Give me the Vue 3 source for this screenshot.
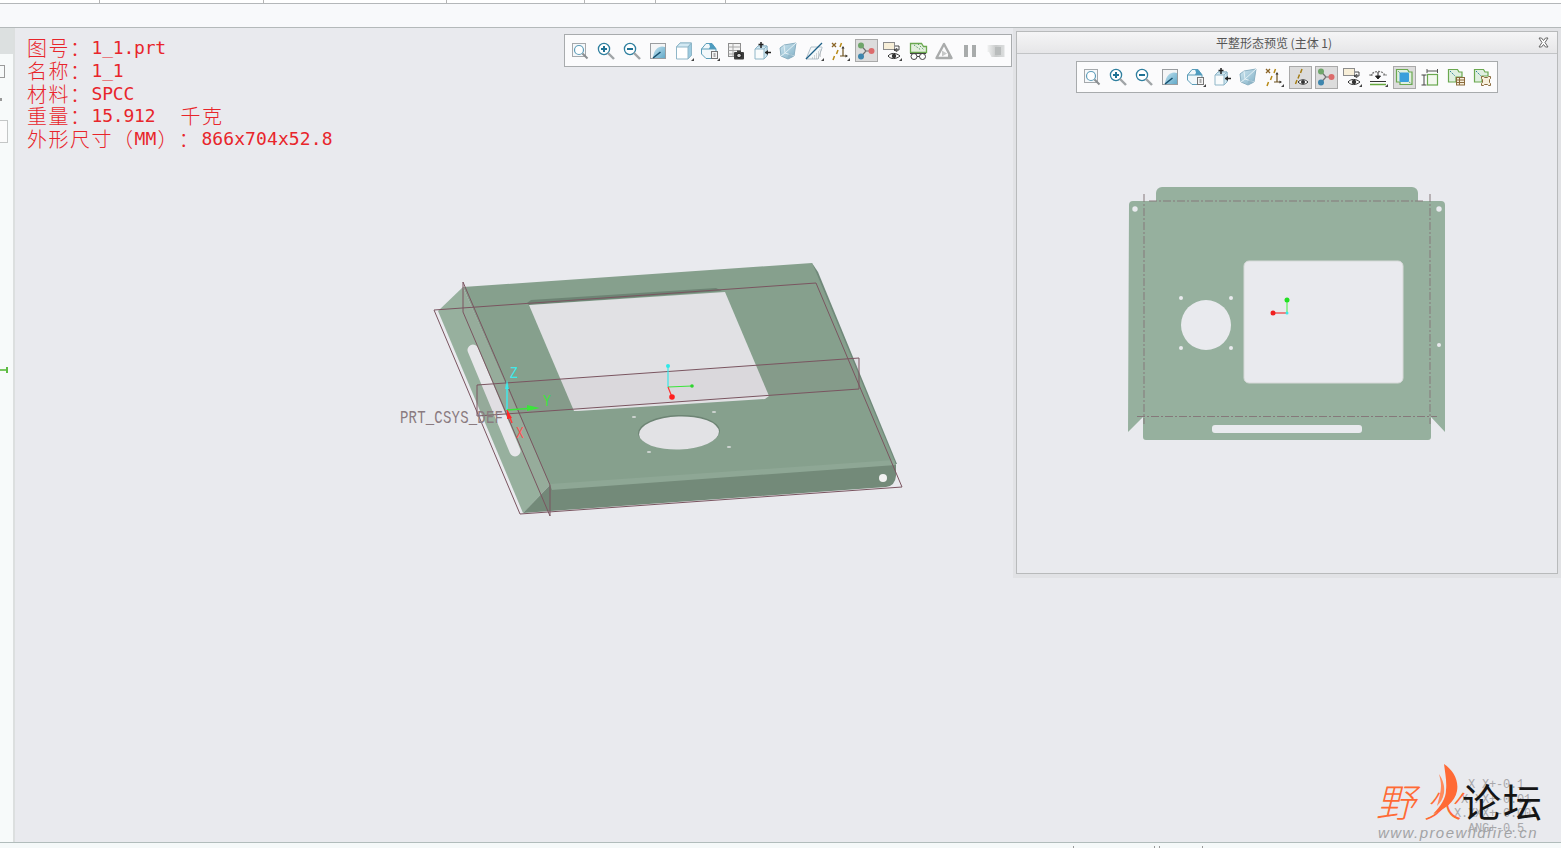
<script setup>
const topTicks = [100, 164, 183, 138, 71, 70]
const mainTools = [
  { id: 'fit' }, { id: 'zin' }, { id: 'zout' }, { id: 'repaint' }, { id: 'shade', dd: true },
  { id: 'orient', dd: true }, { id: 'camera' }, { id: 'spin' }, { id: 'glass' }, { id: 'section', dd: true },
  { id: 'datum', dd: true }, { id: 'branch', on: true }, { id: 'annot', dd: true }, { id: 'greenview' },
  { id: 'tri' }, { id: 'pause' }, { id: 'stop' }
]
const flatTools = [
  { id: 'fit' }, { id: 'zin' }, { id: 'zout' }, { id: 'repaint' }, { id: 'orient', dd: true },
  { id: 'spin' }, { id: 'glass' }, { id: 'datum', dd: true }, { id: 'datumeye', on: true }, { id: 'branch', on: true },
  { id: 'annot', dd: true }, { id: 'flatten', dd: true }, { id: 'greenblue', on: true }, { id: 'ibox' },
  { id: 'greentable' }, { id: 'greenframe' }
]
const info = [
  { cjk: '图号：', rest: '1_1.prt' },
  { cjk: '名称：', rest: '1_1' },
  { cjk: '材料：', rest: 'SPCC' },
  { cjk: '重量：', rest: '15.912  ', tail: '千克', gap: true },
  { cjk: '外形尺寸（', rest: 'MM', tail: '）：', end: '866x704x52.8', wide: true }
]
const smallHoles = [[714, 412], [729, 447], [649, 452], [634, 417]]
const flatHoles = [[1181, 298, 2], [1231, 298, 2], [1181, 348, 2], [1231, 348, 2], [1135, 209, 2.7], [1439, 209, 2.7], [1439, 345, 2]]
const ghostLines = ['X X+-0.1', 'X.XX+-0.01', 'X.XXX+-0.001', 'ANG+-0.5']
</script>

<template>
  <div class="app">
    <svg class="defs" aria-hidden="true">
      <defs>
        <linearGradient id="gBlue" x1="0" y1="0" x2="1" y2="1">
          <stop offset="0" stop-color="#d8eef7" />
          <stop offset="1" stop-color="#5fa8c8" />
        </linearGradient>
        <linearGradient id="gGlass" x1="0" y1="0" x2="1" y2="1">
          <stop offset="0" stop-color="#cfe6f0" />
          <stop offset="1" stop-color="#7fb0c6" />
        </linearGradient>
        <linearGradient id="gStop" x1="0" y1="0" x2="1" y2="0">
          <stop offset="0" stop-color="#f0f1f1" />
          <stop offset=".5" stop-color="#c9cbcb" />
          <stop offset="1" stop-color="#dcdede" />
        </linearGradient>
        <symbol id="fit" viewBox="0 0 20 20">
          <rect x="2.500" y="2.500" width="13" height="13" fill="#f6f8fa" stroke="#a5a9ac" />
          <circle cx="9" cy="9" r="4.500" fill="#fff" stroke="#5d9db9" stroke-width="1.200" />
          <path d="M12.500 12.500 17.500 17.500" stroke="#8b8f92" stroke-width="2" />
        </symbol>
        <symbol id="zin" viewBox="0 0 20 20">
          <circle cx="8" cy="8" r="5.600" fill="#fff" stroke="#2e7f9f" stroke-width="1.300" />
          <path d="M5 8h6M8 5v6" stroke="#1f7295" stroke-width="2" />
          <path d="M12 12 18 18" stroke="#a0a4a7" stroke-width="2.400" />
        </symbol>
        <symbol id="zout" viewBox="0 0 20 20">
          <circle cx="8" cy="8" r="5.600" fill="#fff" stroke="#2e7f9f" stroke-width="1.300" />
          <path d="M5 8h6" stroke="#1f7295" stroke-width="2" />
          <path d="M12 12 18 18" stroke="#a0a4a7" stroke-width="2.400" />
        </symbol>
        <symbol id="repaint" viewBox="0 0 20 20">
          <rect x="2.500" y="2.500" width="15" height="15" fill="url(#gBlue)" stroke="#9a9da0" />
          <path d="M3 3h14v3C12 4 6 7 5 17H3z" fill="#f4f5f6" />
          <path d="M5 17 12.500 11" stroke="#16506f" stroke-width="1.600" />
        </symbol>
        <symbol id="shade" viewBox="0 0 20 20">
          <path d="M2.500 6 6 2h11.500v12L14 18H2.500z" fill="#fff" stroke="#8fb6c8" />
          <path d="M2.500 6H14l3.500-4H6z" fill="#d3e9f3" stroke="#8fb6c8" />
          <path d="M14 6v12l3.500-4V2z" fill="#9ccbe0" stroke="#8fb6c8" />
        </symbol>
        <symbol id="orient" viewBox="0 0 20 20">
          <path d="M1.500 8 6 2.500h6l4 5.500v5l-4 4.500H6l-4.500-4.500z" fill="#f2f8fb" stroke="#5b9db9" />
          <path d="M9 2.500h3l4.500 5.500H9l1-2.500z" fill="#4d9cc0" />
          <path d="M1.500 8H16" stroke="#5b9db9" />
          <rect x="11.500" y="10.500" width="6" height="7" fill="#f4f4f4" stroke="#757575" />
          <path d="M13.500 13h2M13.500 15h2" stroke="#666" />
        </symbol>
        <symbol id="camera" viewBox="0 0 20 20">
          <rect x="2.500" y="2.500" width="12" height="13" fill="#f3f3f3" stroke="#8d8d8d" />
          <path d="M2.500 6h12M2.500 9.500h12M2.500 13h12M7 2.500v13" stroke="#a5a5a5" />
          <rect x="8" y="11" width="10" height="7.500" rx="1" fill="#3c3c3c" />
          <rect x="11" y="9.500" width="4" height="2" fill="#3c3c3c" />
          <circle cx="13" cy="14.500" r="2.300" fill="#cfcfcf" stroke="#111" />
        </symbol>
        <symbol id="spin" viewBox="0 0 20 20">
          <path d="M3 8 6 5h9v10l-3 3H3z" fill="#f8fbfc" stroke="#8fb6c8" />
          <path d="M3 8h9l3-3H6zM12 8v10l3-3V5z" fill="#d0e7f1" stroke="#8fb6c8" />
          <path d="M9 1v6M6.500 3.500h5" stroke="#222" stroke-width="1.500" />
          <path d="M13 11.500h6" stroke="#222" stroke-width="1.500" />
          <path d="M13 11.500 16 9v5z" fill="#222" />
        </symbol>
        <symbol id="glass" viewBox="0 0 20 20">
          <path d="M2 7l4-3 12-2-2 13-6 3-7-3z" fill="url(#gGlass)" stroke="#8bb0c2" />
          <path d="M6 4l1 8-4 3M7 12l9 3M7 12 18 2" stroke="#e3f0f5" fill="none" />
          <path d="M9 18l2-6 5 3z" fill="#8fb4c6" opacity=".7" />
        </symbol>
        <symbol id="section" viewBox="0 0 20 20">
          <path d="M2 18 7 6h11v1L14 18z" fill="#f4f8fa" stroke="#b3c2cb" />
          <path d="M2 18 18 2" stroke="#1c5f86" stroke-width="1.300" />
          <path d="M8 17h8M10 15h7M12 13h6M14 11h4M15.500 9h2.500" stroke="#a9adb0" stroke-dasharray="1 1" />
        </symbol>
        <symbol id="datum" viewBox="0 0 20 20">
          <path d="M2 2l4 4M6 2 2 6" stroke="#8a6426" stroke-width="1.300" />
          <path d="M10 6l1.500-4M6.500 13l1.500-4M3 19l1.500-4" stroke="#b88a16" stroke-width="1.500" />
          <path d="M13 7v8M10 15h6" stroke="#6d5320" stroke-width="1.200" />
          <path d="M13 5l-1.500 2.500h3zM18 15l-2.500-1.500v3z" fill="#33302a" />
        </symbol>
        <symbol id="datumeye" viewBox="0 0 20 20">
          <path d="M12 2 10.500 6M9.500 7.500 8 11.500M7 13 5.500 17" stroke="#a47c14" stroke-width="1.500" />
          <path d="M8 15c3-3 7-3 10 0-3 3-7 3-10 0z" fill="#fff" stroke="#333" />
          <circle cx="13" cy="15" r="2" fill="#333" />
        </symbol>
        <symbol id="branch" viewBox="0 0 20 20">
          <path d="M5 4.500 10 10 5 15.500M10 10h6" stroke="#6f6f6f" stroke-width="1.200" fill="none" />
          <circle cx="5" cy="4.500" r="3" fill="#6fa56a" />
          <circle cx="15.500" cy="10" r="3" fill="#dc6b6b" />
          <circle cx="5" cy="15.500" r="3" fill="#3e86ae" />
        </symbol>
        <symbol id="annot" viewBox="0 0 20 20">
          <rect x="1.500" y="1.500" width="11" height="7" fill="#f8efd8" stroke="#8c8c8c" />
          <path d="M13 5h4v4M17 9h-5M12 9l3-1.500v3z" stroke="#333" fill="none" stroke-width=".9" />
          <path d="M6 15c3-3.400 8-3.400 12 0-4 3.400-9 3.400-12 0z" fill="#fff" stroke="#333" />
          <circle cx="12" cy="15" r="2.200" fill="#333" />
        </symbol>
        <symbol id="greenview" viewBox="0 0 20 20">
          <path d="M2.500 2.500h11l2 3h3v6h-16z" fill="#e3efdd" stroke="#6aa84f" stroke-width="1.300" />
          <path d="M6 4l7 5M10 3l6 6" stroke="#5a9e6d" stroke-dasharray="1.500 1.500" />
          <circle cx="6" cy="15.500" r="3" fill="#fff" stroke="#444" />
          <circle cx="14.500" cy="15.500" r="3" fill="#fff" stroke="#444" />
          <path d="M9 15.500h2.500M2 12.500h16" stroke="#444" />
        </symbol>
        <symbol id="tri" viewBox="0 0 20 20">
          <path d="M10 3 2.500 17h15z" fill="none" stroke="#a9abab" stroke-width="2.400" stroke-linejoin="round" />
          <path d="M8 9.500v6l5-3z" fill="#c6c8c8" />
          <path d="M14 13v5l4-2.500z" fill="#a9abab" />
        </symbol>
        <symbol id="pause" viewBox="0 0 20 20">
          <rect x="4" y="4" width="4" height="12" fill="#a8abab" />
          <rect x="12" y="4" width="4" height="12" fill="#a8abab" />
        </symbol>
        <symbol id="stop" viewBox="0 0 20 20">
          <path d="M1.500 4h17v12h-13L3 11H1.500z" fill="url(#gStop)" />
          <path d="M9 6h6v8H9z" fill="#b9bcbc" />
        </symbol>
        <symbol id="flatten" viewBox="0 0 20 20">
          <path d="M3 9c1-6 13-6 14 0" fill="none" stroke="#777" stroke-width="1.300" stroke-dasharray="2 1" />
          <path d="M1 8h4M15 8h4" stroke="#888" />
          <path d="M10 5v6M7.500 9 10 12l2.500-3z" stroke="#222" fill="#222" />
          <path d="M2 14.500h16" stroke="#333" />
          <path d="M2 17.500h16" stroke="#65a83e" stroke-width="1.500" />
        </symbol>
        <symbol id="greenblue" viewBox="0 0 20 20">
          <path d="M2.500 2.500h11l1.500 2.500h3v12.500H6V15H2.500z" fill="#e0efe0" stroke="#6aa84f" stroke-width="1.200" />
          <rect x="5.500" y="5.500" width="9.500" height="9.500" rx="1" fill="#3b9fdc" />
          <path d="M4 4l3 3M15 15l3 2" stroke="#4f8f60" stroke-dasharray="1 1" />
        </symbol>
        <symbol id="ibox" viewBox="0 0 20 20">
          <path d="M7 2v4M17.500 2v4M7 4h10.500" stroke="#555" fill="none" />
          <path d="M1.500 8h5M1.500 18h5M4 8v10" stroke="#444" fill="none" />
          <rect x="7.500" y="7.500" width="10" height="10.500" fill="#f3f8ef" stroke="#6aa84f" stroke-width="1.200" />
        </symbol>
        <symbol id="greentable" viewBox="0 0 20 20">
          <path d="M2.500 2.500h9l1.500 2.500h3v5h-6v5H2.500z" fill="#e0efe0" stroke="#6aa84f" stroke-width="1.200" />
          <path d="M4 4l5 5" stroke="#2c7f9c" stroke-dasharray="1.500 1" />
          <rect x="10.500" y="10.500" width="8" height="7.500" fill="#f7efdc" stroke="#8a6a3c" />
          <path d="M10.500 13h8M10.500 15.500h8M13.500 10.500V18" stroke="#8a6a3c" />
        </symbol>
        <symbol id="greenframe" viewBox="0 0 20 20">
          <path d="M2.500 2.500h9l1.500 2.500h3v4h-6v6H2.500z" fill="#e0efe0" stroke="#6aa84f" stroke-width="1.200" />
          <path d="M4 4l5 5" stroke="#2c7f9c" stroke-dasharray="1.500 1" />
          <path d="M9.500 9.500h2l1 1h3l1-1h2v2l-1 1v3l1 1v2h-2l-1-1h-3l-1 1h-2v-2l1-1v-3l-1-1z" fill="#f7efdc" stroke="#8a6a3c" />
        </symbol>
        <symbol id="dd" viewBox="0 0 20 20">
          <path d="M20 17v3h-3z" fill="#444" />
        </symbol>
      </defs>
    </svg>

    <div class="ticks-top">
      <span v-for="(w, i) in topTicks" :key="i" class="tick" :style="{ width: w + 'px' }"></span>
    </div>
    <div class="ribbon"></div>

    <div class="main">
      <aside class="side">
        <div class="side-head"></div>
        <div class="side-body">
          <span class="frag-icon"></span>
          <span class="frag-dot"></span>
          <span class="frag-box"></span>
        </div>
      </aside>

      <section class="canvas">
        <svg class="scene" viewBox="15 28 1546 814" width="1546" height="814">
          <!-- flange on the right edge -->
          <polygon points="812,263 818,272 897,464 892,464 813,272" fill="#70897a" />
          <!-- top plate -->
          <polygon points="463,287 812,263 816,272 895,462 550,488" fill="#86a08d" />
          <!-- front face -->
          <path d="M550,488 L896,464 L896,476 Q895,486 886,487 L523,513 Z" fill="#738a79" />
          <!-- bend highlight -->
          <polygon points="550,484 894,460 896,465 551,490" fill="#8ea795" />
          <!-- left flange -->
          <polygon points="463,287 438,311 523,513 550,485" fill="#97b09e" />
          <polygon points="523,513 550,485 552,490" fill="#738a79" />
          <line x1="473" y1="350" x2="515" y2="451" stroke="#e7e7ea" stroke-width="11" stroke-linecap="round" />
          <!-- top slit -->
          <polygon points="527,303 531,300 716,288 722,291 529,305" fill="#6d8474" />
          <!-- opening -->
          <polygon points="529,305 725,292 769,396 765,399 578,411 574,411" fill="#e1e1e4" />
          <!-- round hole -->
          <ellipse cx="679" cy="432" rx="41" ry="17" fill="#6d8474" transform="rotate(-2 679 432)" />
          <ellipse cx="679" cy="433" rx="40" ry="16.500" fill="#e2e2e5" transform="rotate(-2 679 433)" />
          <ellipse v-for="h in smallHoles" :key="h[0]" :cx="h[0]" :cy="h[1]" rx="2.200" ry="1.100" fill="#cfd5d2" />
          <circle cx="883" cy="478" r="4" fill="#f2f2f2" />
          <!-- datum planes -->
          <g fill="none" stroke="#7a5560" stroke-width="1">
            <polygon points="477,385 859,358 859,389 477,416" fill="#7a5560" fill-opacity=".06" />
            <polygon points="434,310 816,283 902,487 520,514" />
            <polygon points="463,282 550,485 550,516 463,312" fill="#7a5560" fill-opacity=".04" />
          </g>
          <!-- part csys -->
          <text transform="translate(400 423) scale(1 1.300)" class="csys-name">PRT_CSYS_DEF</text>
          <path d="M507 410V386" stroke="#3fe9ea" stroke-width="1.500" />
          <path d="M507 380l-2 9h4z" fill="#3fe9ea" />
          <path d="M507 410 534 408" stroke="#3be43b" stroke-width="1.500" />
          <path d="M540 408l-13-3v6z" fill="#3be43b" />
          <path d="M507 410l5 13" stroke="#ff3b3b" stroke-width="1.500" />
          <path d="M507 410l0 9 5-1z" fill="#ff2a2a" />
          <text transform="translate(510 378) scale(1 1.300)" class="axis z">Z</text>
          <text transform="translate(543 406) scale(1 1.300)" class="axis y">Y</text>
          <text transform="translate(516 438) scale(1 1.300)" class="axis x">X</text>
          <!-- default csys -->
          <path d="M668 387V366" stroke="#38e8e8" stroke-width="1.200" />
          <path d="M668 387 692 386" stroke="#3be43b" stroke-width="1.200" />
          <path d="M668 387 672 397" stroke="#ff3030" stroke-width="1.200" />
          <circle cx="668" cy="366" r="2" fill="#2fe8e8" />
          <circle cx="692" cy="386" r="1.800" fill="#2fd42f" />
          <circle cx="672" cy="397" r="2.800" fill="#ff2020" />
        </svg>

        <div class="info">
          <div v-for="(l, i) in info" :key="i" class="info-line" :class="{ wide: l.wide }">
            <span class="cn">{{ l.cjk }}</span><span class="lat">{{ l.rest }}</span><span v-if="l.tail" class="cn" :class="{ gap: l.gap }">{{ l.tail }}</span><span v-if="l.end" class="lat">{{ l.end }}</span>
          </div>
        </div>

        <div class="toolbar main-bar">
          <span v-for="t in mainTools" :key="t.id" class="tool" :class="{ on: t.on }">
            <svg width="20" height="20"><use :href="'#' + t.id" /><use v-if="t.dd" href="#dd" /></svg>
          </span>
        </div>

        <div class="preview-frame">
          <div class="preview">
            <header class="pv-title">
              <span class="pv-name">平整形态预览 (主体 1)</span>
              <svg class="pv-close" width="11" height="11" viewBox="0 0 11 11">
                <path d="M1 1h2.500l2 2.500L7.500 1H10L7 5.500 10 10H7.500l-2-2.500-2 2.500H1l3-4.500z" fill="#fff" stroke="#666" />
              </svg>
            </header>
            <div class="pv-body">
              <div class="toolbar flat-bar">
                <span v-for="t in flatTools" :key="t.id" class="tool" :class="{ on: t.on }">
                  <svg width="20" height="20"><use :href="'#' + t.id" /><use v-if="t.dd" href="#dd" /></svg>
                </span>
              </div>
              <svg class="flat" viewBox="1017 54 541 519" width="541" height="519">
                <rect x="1156" y="187" width="262" height="30" rx="6" fill="#96b09e" />
                <path d="M1133 201H1441Q1445 201 1445 205V432L1431 417V437Q1431 440 1428 440H1146Q1143 440 1143 437V417L1128 432L1129 205Q1129 201 1133 201Z" fill="#96b09e" />
                <rect x="1244" y="261" width="159" height="122" rx="5" fill="#e9eaee" stroke="#d6d9d8" />
                <circle cx="1206" cy="325" r="25" fill="#e9eaee" />
                <circle v-for="h in flatHoles" :key="h[0] + '-' + h[1]" :cx="h[0]" :cy="h[1]" :r="h[2]" fill="#e9eaee" />
                <rect x="1212" y="425" width="150" height="8" rx="3" fill="#e9eaee" />
                <g stroke="#85787a" stroke-width="1" stroke-dasharray="8 2 2 2" fill="none">
                  <path d="M1144 194V424" />
                  <path d="M1430 194V424" />
                  <path d="M1149 201H1424" />
                  <path d="M1137 416.500H1437" />
                </g>
                <path d="M1287 313V300" stroke="#95ee95" stroke-width="2" />
                <path d="M1287 313H1273" stroke="#ee3a3a" stroke-width="1.200" />
                <circle cx="1287" cy="300" r="2.500" fill="#22e022" />
                <circle cx="1273" cy="313" r="2.500" fill="#f02020" />
                <circle cx="1287" cy="313" r="1.500" fill="#3ae8e8" />
              </svg>
            </div>
          </div>
        </div>

        <div class="watermark">
          <div class="ghost">
            <div v-for="g in ghostLines" :key="g">{{ g }}</div>
          </div>
          <svg class="flame" width="25" height="50" viewBox="0 0 25 50">
            <path d="M11 0C20 6 26 16 24 27 22 38 11 46 0 50 8 42 13 34 13 26 14 18 12 8 11 0Z" fill="#ff6a35" />
            <path d="M6 10C10 16 12 22 11 29 10 35 7 39 4 42 6 34 8 28 8 22 8 18 7 14 6 10Z" fill="#ff8a5c" />
          </svg>
          <div class="wm-title"><span class="fire">野 火</span><span class="forum">论坛</span></div>
          <div class="wm-url">www.proewildfire.cn</div>
        </div>

        <span class="ground-mark"></span>
      </section>
    </div>

    <div class="status">
      <span class="s-tick"></span><span class="s-tick t2"></span><span class="s-tick t3"></span><span class="s-tick t4"></span>
    </div>
  </div>
</template>

<style scoped>
.app {
  position: relative;
  width: 1561px;
  height: 848px;
  display: flex;
  flex-direction: column;
  overflow: hidden;
  background: #e9eaee;
}
.defs { position: absolute; width: 0; height: 0; }
.ticks-top {
  height: 3px;
  display: flex;
  background: #fff;
  border-bottom: 1px solid #b4b7b9;
  flex: none;
}
.tick { height: 3px; border-right: 1px solid #b5b5b5; box-sizing: border-box; flex: none; }
.ribbon {
  height: 23px;
  flex: none;
  background: #f8f9fb;
  border-bottom: 1px solid #b4b9ba;
}
.main { flex: 1; display: flex; min-height: 0; }
.side {
  width: 13px;
  flex: none;
  display: flex;
  flex-direction: column;
  border-right: 2px solid #dcdfdf;
}
.side-head { height: 26px; background: #dce0e0; flex: none; }
.side-body { flex: 1; background: #f7fafa; position: relative; }
.frag-icon { position: absolute; left: 0; top: 11px; width: 4px; height: 11px; border: 1px solid #9a9a9a; border-left: 0; }
.frag-dot { position: absolute; left: 0; top: 44px; width: 2px; height: 3px; background: #999; }
.frag-box { position: absolute; left: 0; top: 66px; width: 7px; height: 21px; border: 1px solid #c4c6c6; border-left: 0; background: #fbfbfb; }
.canvas { flex: 1; position: relative; background: #e9eaee; min-width: 0; }
.scene { display: block; }
.csys-name { font: 14px "Liberation Mono", monospace; letter-spacing: .2px; fill: #8a7b80; }
.axis { font: 13px "Liberation Mono", monospace; }
.z { fill: #3fe9ea; }
.y { fill: #3be43b; }
.x { fill: #ff5050; }
.info {
  position: absolute;
  left: 12px;
  top: 9px;
  color: #e8252b;
  white-space: pre;
  text-spacing-trim: space-all;
}
.info-line { height: 22.700px; line-height: 22.700px; display: flex; align-items: center; }
.cn { font: 300 20px/22px "Noto Sans CJK SC", sans-serif; letter-spacing: 1.500px; text-spacing-trim: space-all; }
.gap { margin-left: 4px; }
.lat { font: 18px/22px "DejaVu Sans Mono", monospace; letter-spacing: -.2px; white-space: pre; }
.wide .lat { letter-spacing: .1px; font-weight: 400; }
.wide .cn:nth-child(3) { margin-left: 1px; margin-right: 1px; }
.toolbar {
  position: absolute;
  display: flex;
  align-items: center;
  box-sizing: border-box;
  padding: 0 2px;
  height: 33px;
  background: #fbfbfc;
  border: 1px solid #a8abad;
}
.main-bar { left: 549px; top: 6px; width: 448px; }
.flat-bar { left: 59px; top: 7px; width: 422px; height: 32px; }
.tool {
  width: 26px;
  height: 23px;
  flex: none;
  display: flex;
  align-items: center;
  justify-content: center;
  box-sizing: border-box;
}
.tool.on { width: 23px; margin: 0 1.500px; background: #dcdcdc; box-shadow: inset 0 0 0 1px #a9a9a9; }
.tool svg { display: block; }
.preview-frame {
  position: absolute;
  left: 998px;
  top: 0;
  width: 548px;
  height: 550px;
  box-sizing: border-box;
  padding: 3px;
  background: #e1e2e5;
}
.preview {
  width: 542px;
  height: 543px;
  box-sizing: border-box;
  border: 1px solid #b8babb;
  background: #e9eaee;
  display: flex;
  flex-direction: column;
}
.pv-title {
  height: 21px;
  flex: none;
  display: flex;
  align-items: center;
  justify-content: center;
  position: relative;
  padding-right: 26px;
  background: linear-gradient(#f5f5f6, #e6e6e8);
  border-bottom: 1px solid #c2c4c6;
}
.pv-name { font: 12px "Noto Sans CJK SC", "Liberation Sans", sans-serif; color: #555; }
.pv-close { position: absolute; right: 8px; top: 5px; }
.pv-body { flex: 1; position: relative; }
.flat { display: block; position: absolute; left: 0; top: 0; }
.watermark {
  position: absolute;
  right: 0;
  bottom: 0;
  width: 200px;
  height: 84px;
}
.ghost {
  position: absolute;
  left: 85px;
  top: 20px;
  width: 100px;
  text-align: center;
  font: 12px/14.500px "Liberation Mono", monospace;
  letter-spacing: -.2px;
  color: #a8a8ab;
}
.flame { position: absolute; left: 72px; top: 6px; }
.wm-title { position: absolute; left: 15px; top: 22px; display: flex; align-items: center; line-height: 40px; }
.fire { font: italic 300 39px/40px "Noto Sans CJK SC", sans-serif; color: #ff6a35; width: 86px; white-space: pre; }
.forum { font: 39px/40px "Noto Sans CJK SC", sans-serif; color: #151515; letter-spacing: 2px; }
.wm-url {
  position: absolute;
  left: 17px;
  top: 66px;
  font: italic 15px "Liberation Sans", sans-serif;
  letter-spacing: 1.450px;
  color: #a2a3a5;
  white-space: nowrap;
}
.ground-mark {
  position: absolute;
  left: -15px;
  top: 341px;
  width: 7px;
  height: 2px;
  background: #78c860;
}
.ground-mark::after {
  content: "";
  position: absolute;
  left: 6px;
  top: -2px;
  width: 2px;
  height: 6px;
  background: #5dbb43;
}
.status {
  height: 5px;
  flex: none;
  position: relative;
  background: #f5f9f9;
  border-top: 1px solid #b1bcbb;
}
.s-tick { position: absolute; left: 1073px; top: 3px; width: 1px; height: 2px; background: #999; }
.t2 { left: 1154px; }
.t3 { left: 1159px; }
.t4 { left: 1202px; }
</style>
